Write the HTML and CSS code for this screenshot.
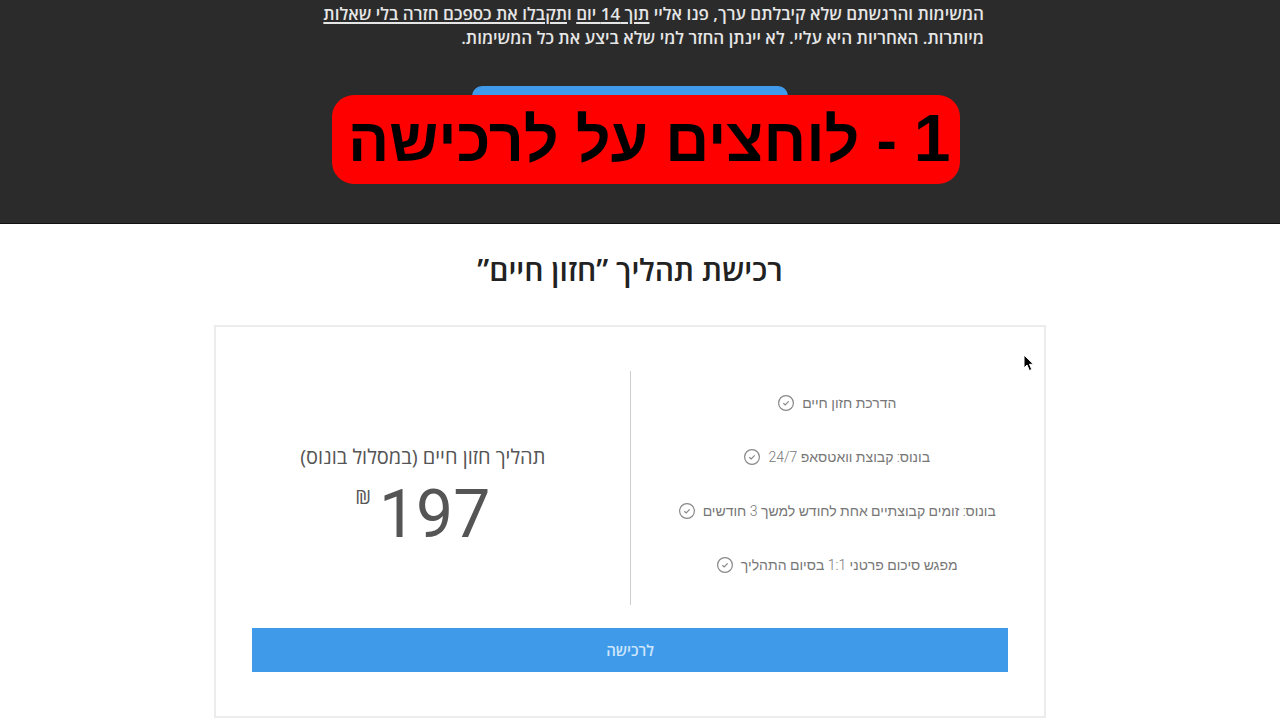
FILE: index.html
```html
<!DOCTYPE html>
<html lang="he" dir="rtl">
<head>
    <meta charset="UTF-8">
    <meta name="viewport" content="width=device-width, initial-scale=1.0">
    <title>חזון חיים</title>
    <link rel="stylesheet" href="styles.css">
</head>
<body>
    <section class="guarantee">
        <p>המשימות והרגשתם שלא קיבלתם ערך, פנו אליי <u>תוך 14 יום</u> ו<u>תקבלו את כספכם חזרה בלי שאלות</u><br>מיותרות. האחריות היא עליי. לא יינתן החזר למי שלא ביצע את כל המשימות.</p>
        <button class="top-btn" aria-label="לרכישה"></button>
    </section>

    <main class="purchase">
        <h1>רכישת תהליך ”חזון חיים”</h1>
        <div class="card">
            <div class="plan">
                <ul class="features">
                    <li>הדרכת חזון חיים <svg class="check" viewBox="0 0 16 16"><circle cx="8" cy="8" r="7.4"/><path d="M5.3 8.2l1.9 1.8 3.5-3.6"/></svg></li>
                    <li>בונוס: קבוצת וואטסאפ 24/7 <svg class="check" viewBox="0 0 16 16"><circle cx="8" cy="8" r="7.4"/><path d="M5.3 8.2l1.9 1.8 3.5-3.6"/></svg></li>
                    <li>בונוס: זומים קבוצתיים אחת לחודש למשך 3 חודשים <svg class="check" viewBox="0 0 16 16"><circle cx="8" cy="8" r="7.4"/><path d="M5.3 8.2l1.9 1.8 3.5-3.6"/></svg></li>
                    <li>מפגש סיכום פרטני 1:1 בסיום התהליך <svg class="check" viewBox="0 0 16 16"><circle cx="8" cy="8" r="7.4"/><path d="M5.3 8.2l1.9 1.8 3.5-3.6"/></svg></li>
                </ul>
                <div class="price-box">
                    <h2>תהליך חזון חיים (במסלול בונוס)</h2>
                    <div class="price"><span class="amount">197</span><span class="currency">₪</span></div>
                </div>
            </div>
            <button class="buy-btn">לרכישה</button>
        </div>
    </main>

    <div class="step"><span class="num">1</span> - לוחצים על לרכישה</div>
    <svg class="cursor" viewBox="0 0 12 18"><path d="M1 1v13l3-3 2.400 5.500 2.400-1L6.500 10.300H10.500z"/></svg>
</body>
</html>
```

FILE: styles.css
```css
* {
    box-sizing: border-box;
}
body {
    margin: 0;
    position: relative;
    background: white;
    color: #222;
    font-family: "Open Sans", "Noto Sans", sans-serif;
    overflow: hidden;
}
.guarantee {
    background: #2b2b2b;
    color: #e6e6e6;
    padding: 0 20px 81px 0;
    border-bottom: 1px solid #111;
    display: flex;
    flex-direction: column;
    align-items: center;
}
.guarantee p {
    margin: 2px 0 36px;
    width: 708px;
    font-size: 17px;
    font-weight: 600;
    line-height: 24px;
    white-space: nowrap;
}
.guarantee u {
    text-decoration-thickness: 2px;
    text-underline-offset: 2px;
}
.top-btn {
    width: 316px;
    height: 56px;
    border: none;
    border-radius: 10px;
    background: #3f9bea;
}
.purchase {
    padding-right: 20px;
}
h1 {
    margin: 26px 0 35px;
    text-align: center;
    font-size: 30px;
    font-weight: 600;
    line-height: 40px;
}
.card {
    max-width: 832px;
    margin: 0 auto;
    padding: 44px 0;
    border: 2px solid #ececec;
}
.plan {
    display: flex;
    margin-bottom: 23px;
}
.features {
    flex: 1;
    margin: 0;
    padding: 20px 0 28px;
    list-style: none;
    border-left: 1px solid #ccc;
    color: #777;
    font-family: Roboto, "Liberation Sans", Arial, sans-serif;
    font-size: 14px;
    font-weight: 300;
    line-height: 24px;
    display: flex;
    flex-direction: column;
    gap: 30px;
}
.features li {
    display: flex;
    justify-content: center;
    align-items: center;
    gap: 8px;
}
.check {
    width: 16px;
    height: 16px;
    fill: none;
    stroke: #888;
    stroke-width: 1.2;
}
.price-box {
    flex: 1;
    padding-top: 26px;
    color: #555;
    display: flex;
    flex-direction: column;
    align-items: center;
    justify-content: center;
}
h2 {
    margin: 0;
    font-size: 20px;
    font-weight: 400;
    line-height: 28px;
}
.price {
    display: flex;
    gap: 8px;
    font-family: Roboto, "Open Sans", sans-serif;
}
.amount {
    font-size: 66px;
    line-height: 88px;
}
.currency {
    padding-top: 16px;
    font-family: "Open Sans", sans-serif;
    font-size: 20px;
    line-height: 20px;
}
.buy-btn {
    display: block;
    width: calc(100% - 72px);
    height: 44px;
    margin: 0 auto;
    border: none;
    background: #3f9bea;
    color: #cfe6fb;
    font-family: "Open Sans", sans-serif;
    font-size: 15px;
    font-weight: 600;
}
.step {
    position: absolute;
    top: 95px;
    left: 332px;
    padding: 2px 10px 0 16px;
    border-radius: 22px;
    background: red;
    color: black;
    font-family: "Liberation Sans", Arial, sans-serif;
    font-size: 61px;
    font-weight: bold;
    line-height: 87px;
    white-space: nowrap;
}
.step .num {
    font-size: 66px;
    line-height: 1;
}
.cursor {
    position: absolute;
    top: 354px;
    left: 1023px;
    width: 12px;
    height: 18px;
    fill: black;
    stroke: white;
    stroke-width: 1;
}
```
